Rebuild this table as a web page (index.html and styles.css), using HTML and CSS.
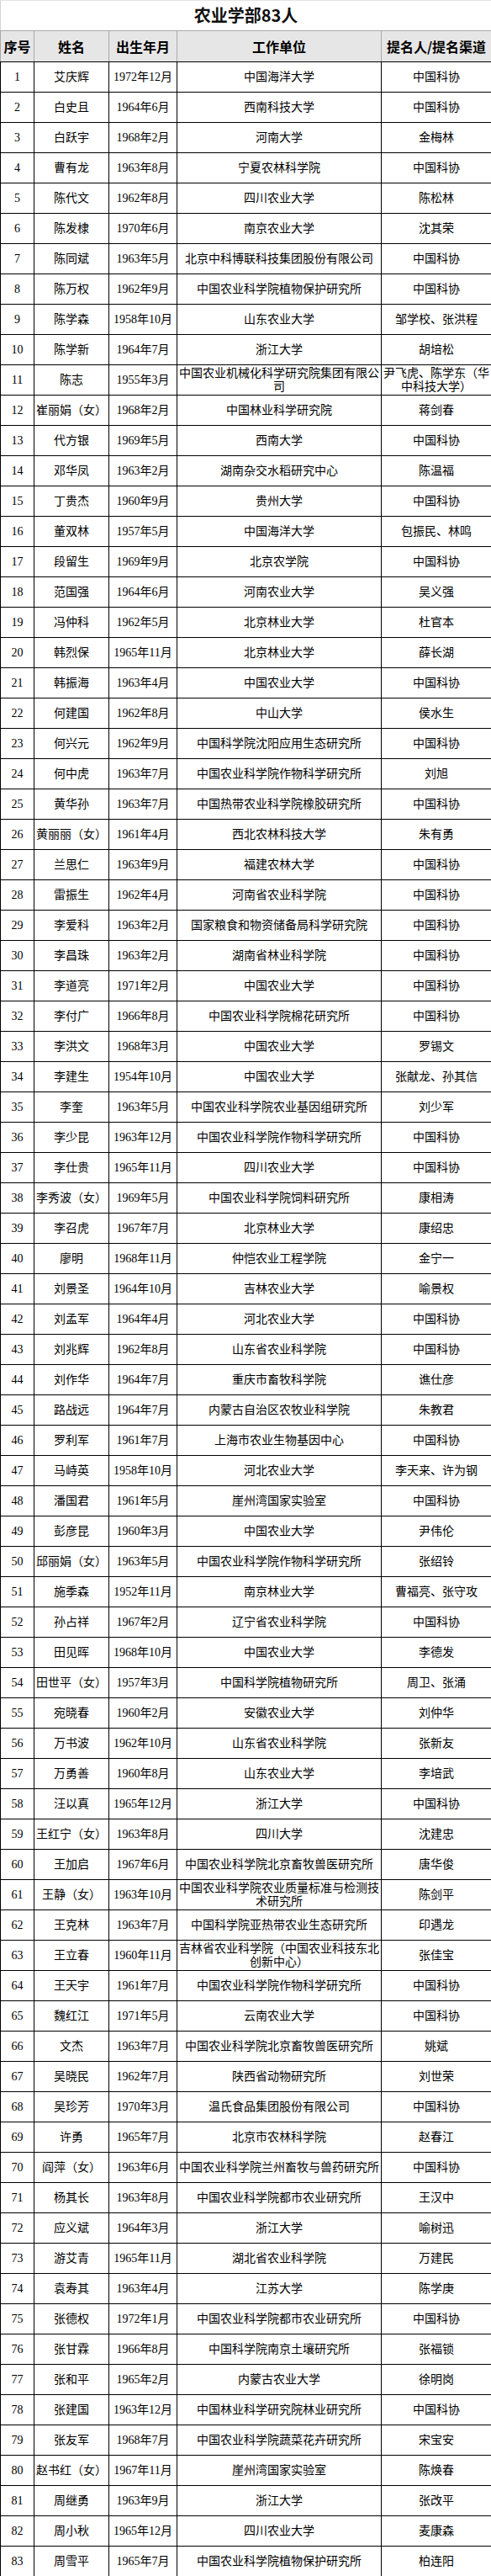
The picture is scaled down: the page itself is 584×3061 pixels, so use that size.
FILE: index.html
```html
<!DOCTYPE html>
<html lang="zh-CN">
<head>
<meta charset="utf-8">
<title>农业学部83人</title>
<link rel="stylesheet" href="styles.css">
</head>
<body>
<div class="sheet">
<div class="title">农业学部83人</div>
<table class="list">
<colgroup><col class="c-no"><col class="c-name"><col class="c-date"><col class="c-org"><col class="c-nom"></colgroup>
<thead>
<tr><th>序号</th><th>姓名</th><th>出生年月</th><th>工作单位</th><th>提名人/提名渠道</th></tr>
</thead>
<tbody>
<tr><td>1</td><td>艾庆辉</td><td>1972年12月</td><td>中国海洋大学</td><td>中国科协</td></tr>
<tr><td>2</td><td>白史且</td><td>1964年6月</td><td>西南科技大学</td><td>中国科协</td></tr>
<tr><td>3</td><td>白跃宇</td><td>1968年2月</td><td>河南大学</td><td>金梅林</td></tr>
<tr><td>4</td><td>曹有龙</td><td>1963年8月</td><td>宁夏农林科学院</td><td>中国科协</td></tr>
<tr><td>5</td><td>陈代文</td><td>1962年8月</td><td>四川农业大学</td><td>陈松林</td></tr>
<tr><td>6</td><td>陈发棣</td><td>1970年6月</td><td>南京农业大学</td><td>沈其荣</td></tr>
<tr><td>7</td><td>陈同斌</td><td>1963年5月</td><td>北京中科博联科技集团股份有限公司</td><td>中国科协</td></tr>
<tr><td>8</td><td>陈万权</td><td>1962年9月</td><td>中国农业科学院植物保护研究所</td><td>中国科协</td></tr>
<tr><td>9</td><td>陈学森</td><td>1958年10月</td><td>山东农业大学</td><td>邹学校、张洪程</td></tr>
<tr><td>10</td><td>陈学新</td><td>1964年7月</td><td>浙江大学</td><td>胡培松</td></tr>
<tr><td>11</td><td>陈志</td><td>1955年3月</td><td>中国农业机械化科学研究院集团有限公司</td><td>尹飞虎、陈学东（华中科技大学）</td></tr>
<tr><td>12</td><td>崔丽娟（女）</td><td>1968年2月</td><td>中国林业科学研究院</td><td>蒋剑春</td></tr>
<tr><td>13</td><td>代方银</td><td>1969年5月</td><td>西南大学</td><td>中国科协</td></tr>
<tr><td>14</td><td>邓华凤</td><td>1963年2月</td><td>湖南杂交水稻研究中心</td><td>陈温福</td></tr>
<tr><td>15</td><td>丁贵杰</td><td>1960年9月</td><td>贵州大学</td><td>中国科协</td></tr>
<tr><td>16</td><td>董双林</td><td>1957年5月</td><td>中国海洋大学</td><td>包振民、林鸣</td></tr>
<tr><td>17</td><td>段留生</td><td>1969年9月</td><td>北京农学院</td><td>中国科协</td></tr>
<tr><td>18</td><td>范国强</td><td>1964年6月</td><td>河南农业大学</td><td>吴义强</td></tr>
<tr><td>19</td><td>冯仲科</td><td>1962年5月</td><td>北京林业大学</td><td>杜官本</td></tr>
<tr><td>20</td><td>韩烈保</td><td>1965年11月</td><td>北京林业大学</td><td>薛长湖</td></tr>
<tr><td>21</td><td>韩振海</td><td>1963年4月</td><td>中国农业大学</td><td>中国科协</td></tr>
<tr><td>22</td><td>何建国</td><td>1962年8月</td><td>中山大学</td><td>侯水生</td></tr>
<tr><td>23</td><td>何兴元</td><td>1962年9月</td><td>中国科学院沈阳应用生态研究所</td><td>中国科协</td></tr>
<tr><td>24</td><td>何中虎</td><td>1963年7月</td><td>中国农业科学院作物科学研究所</td><td>刘旭</td></tr>
<tr><td>25</td><td>黄华孙</td><td>1963年7月</td><td>中国热带农业科学院橡胶研究所</td><td>中国科协</td></tr>
<tr><td>26</td><td>黄丽丽（女）</td><td>1961年4月</td><td>西北农林科技大学</td><td>朱有勇</td></tr>
<tr><td>27</td><td>兰思仁</td><td>1963年9月</td><td>福建农林大学</td><td>中国科协</td></tr>
<tr><td>28</td><td>雷振生</td><td>1962年4月</td><td>河南省农业科学院</td><td>中国科协</td></tr>
<tr><td>29</td><td>李爱科</td><td>1963年2月</td><td>国家粮食和物资储备局科学研究院</td><td>中国科协</td></tr>
<tr><td>30</td><td>李昌珠</td><td>1963年2月</td><td>湖南省林业科学院</td><td>中国科协</td></tr>
<tr><td>31</td><td>李道亮</td><td>1971年2月</td><td>中国农业大学</td><td>中国科协</td></tr>
<tr><td>32</td><td>李付广</td><td>1966年8月</td><td>中国农业科学院棉花研究所</td><td>中国科协</td></tr>
<tr><td>33</td><td>李洪文</td><td>1968年3月</td><td>中国农业大学</td><td>罗锡文</td></tr>
<tr><td>34</td><td>李建生</td><td>1954年10月</td><td>中国农业大学</td><td>张献龙、孙其信</td></tr>
<tr><td>35</td><td>李奎</td><td>1963年5月</td><td>中国农业科学院农业基因组研究所</td><td>刘少军</td></tr>
<tr><td>36</td><td>李少昆</td><td>1963年12月</td><td>中国农业科学院作物科学研究所</td><td>中国科协</td></tr>
<tr><td>37</td><td>李仕贵</td><td>1965年11月</td><td>四川农业大学</td><td>中国科协</td></tr>
<tr><td>38</td><td>李秀波（女）</td><td>1969年5月</td><td>中国农业科学院饲料研究所</td><td>康相涛</td></tr>
<tr><td>39</td><td>李召虎</td><td>1967年7月</td><td>北京林业大学</td><td>康绍忠</td></tr>
<tr><td>40</td><td>廖明</td><td>1968年11月</td><td>仲恺农业工程学院</td><td>金宁一</td></tr>
<tr><td>41</td><td>刘景圣</td><td>1964年10月</td><td>吉林农业大学</td><td>喻景权</td></tr>
<tr><td>42</td><td>刘孟军</td><td>1964年4月</td><td>河北农业大学</td><td>中国科协</td></tr>
<tr><td>43</td><td>刘兆辉</td><td>1962年8月</td><td>山东省农业科学院</td><td>中国科协</td></tr>
<tr><td>44</td><td>刘作华</td><td>1964年7月</td><td>重庆市畜牧科学院</td><td>谯仕彦</td></tr>
<tr><td>45</td><td>路战远</td><td>1964年7月</td><td>内蒙古自治区农牧业科学院</td><td>朱教君</td></tr>
<tr><td>46</td><td>罗利军</td><td>1961年7月</td><td>上海市农业生物基因中心</td><td>中国科协</td></tr>
<tr><td>47</td><td>马峙英</td><td>1958年10月</td><td>河北农业大学</td><td>李天来、许为钢</td></tr>
<tr><td>48</td><td>潘国君</td><td>1961年5月</td><td>崖州湾国家实验室</td><td>中国科协</td></tr>
<tr><td>49</td><td>彭彦昆</td><td>1960年3月</td><td>中国农业大学</td><td>尹伟伦</td></tr>
<tr><td>50</td><td>邱丽娟（女）</td><td>1963年5月</td><td>中国农业科学院作物科学研究所</td><td>张绍铃</td></tr>
<tr><td>51</td><td>施季森</td><td>1952年11月</td><td>南京林业大学</td><td>曹福亮、张守攻</td></tr>
<tr><td>52</td><td>孙占祥</td><td>1967年2月</td><td>辽宁省农业科学院</td><td>中国科协</td></tr>
<tr><td>53</td><td>田见晖</td><td>1968年10月</td><td>中国农业大学</td><td>李德发</td></tr>
<tr><td>54</td><td>田世平（女）</td><td>1957年3月</td><td>中国科学院植物研究所</td><td>周卫、张涌</td></tr>
<tr><td>55</td><td>宛晓春</td><td>1960年2月</td><td>安徽农业大学</td><td>刘仲华</td></tr>
<tr><td>56</td><td>万书波</td><td>1962年10月</td><td>山东省农业科学院</td><td>张新友</td></tr>
<tr><td>57</td><td>万勇善</td><td>1960年8月</td><td>山东农业大学</td><td>李培武</td></tr>
<tr><td>58</td><td>汪以真</td><td>1965年12月</td><td>浙江大学</td><td>中国科协</td></tr>
<tr><td>59</td><td>王红宁（女）</td><td>1963年8月</td><td>四川大学</td><td>沈建忠</td></tr>
<tr><td>60</td><td>王加启</td><td>1967年6月</td><td>中国农业科学院北京畜牧兽医研究所</td><td>唐华俊</td></tr>
<tr><td>61</td><td>王静（女）</td><td>1963年10月</td><td>中国农业科学院农业质量标准与检测技术研究所</td><td>陈剑平</td></tr>
<tr><td>62</td><td>王克林</td><td>1963年7月</td><td>中国科学院亚热带农业生态研究所</td><td>印遇龙</td></tr>
<tr><td>63</td><td>王立春</td><td>1960年11月</td><td>吉林省农业科学院（中国农业科技东北创新中心）</td><td>张佳宝</td></tr>
<tr><td>64</td><td>王天宇</td><td>1961年7月</td><td>中国农业科学院作物科学研究所</td><td>中国科协</td></tr>
<tr><td>65</td><td>魏红江</td><td>1971年5月</td><td>云南农业大学</td><td>中国科协</td></tr>
<tr><td>66</td><td>文杰</td><td>1963年7月</td><td>中国农业科学院北京畜牧兽医研究所</td><td>姚斌</td></tr>
<tr><td>67</td><td>吴晓民</td><td>1962年7月</td><td>陕西省动物研究所</td><td>刘世荣</td></tr>
<tr><td>68</td><td>吴珍芳</td><td>1970年3月</td><td>温氏食品集团股份有限公司</td><td>中国科协</td></tr>
<tr><td>69</td><td>许勇</td><td>1965年7月</td><td>北京市农林科学院</td><td>赵春江</td></tr>
<tr><td>70</td><td>阎萍（女）</td><td>1963年6月</td><td>中国农业科学院兰州畜牧与兽药研究所</td><td>中国科协</td></tr>
<tr><td>71</td><td>杨其长</td><td>1963年8月</td><td>中国农业科学院都市农业研究所</td><td>王汉中</td></tr>
<tr><td>72</td><td>应义斌</td><td>1964年3月</td><td>浙江大学</td><td>喻树迅</td></tr>
<tr><td>73</td><td>游艾青</td><td>1965年11月</td><td>湖北省农业科学院</td><td>万建民</td></tr>
<tr><td>74</td><td>袁寿其</td><td>1963年4月</td><td>江苏大学</td><td>陈学庚</td></tr>
<tr><td>75</td><td>张德权</td><td>1972年1月</td><td>中国农业科学院都市农业研究所</td><td>中国科协</td></tr>
<tr><td>76</td><td>张甘霖</td><td>1966年8月</td><td>中国科学院南京土壤研究所</td><td>张福锁</td></tr>
<tr><td>77</td><td>张和平</td><td>1965年2月</td><td>内蒙古农业大学</td><td>徐明岗</td></tr>
<tr><td>78</td><td>张建国</td><td>1963年12月</td><td>中国林业科学研究院林业研究所</td><td>中国科协</td></tr>
<tr><td>79</td><td>张友军</td><td>1968年7月</td><td>中国农业科学院蔬菜花卉研究所</td><td>宋宝安</td></tr>
<tr><td>80</td><td>赵书红（女）</td><td>1967年11月</td><td>崖州湾国家实验室</td><td>陈焕春</td></tr>
<tr><td>81</td><td>周继勇</td><td>1963年9月</td><td>浙江大学</td><td>张改平</td></tr>
<tr><td>82</td><td>周小秋</td><td>1965年12月</td><td>四川农业大学</td><td>麦康森</td></tr>
<tr><td>83</td><td>周雪平</td><td>1965年7月</td><td>中国农业科学院植物保护研究所</td><td>柏连阳</td></tr>
</tbody>
</table>
</div>
</body>
</html>
```
FILE: styles.css
```css
html, body {
  margin: 0;
  padding: 0;
  background: #ffffff;
}

.sheet {
  width: 584px;
}

.title {
  height: 36px;
  box-sizing: border-box;
  border-left: 1px solid #d4d4d4;
  border-top: 1px solid #e4e4e4;
  text-align: center;
  font-family: "Noto Sans CJK SC", sans-serif;
  font-weight: bold;
  font-size: 20px;
  line-height: 34px;
  color: #111111;
}

.list {
  width: 584px;
  border-collapse: collapse;
  table-layout: fixed;
}

.c-no { width: 40px; }
.c-name { width: 89px; }
.c-date { width: 81px; }
.c-org { width: 243px; }
.c-nom { width: 131px; }

.list th,
.list td {
  border: 1px solid #000000;
  padding: 0 1px;
  text-align: center;
  vertical-align: middle;
  color: #000000;
}

.list th {
  height: 36px;
  background: #e7e6e6;
  border-color: #a9a9a9;
  border-bottom-color: #000000;
  font-family: "Noto Sans CJK SC", sans-serif;
  font-weight: bold;
  font-size: 16px;
  line-height: 20px;
  white-space: nowrap;
}

.list td {
  height: 35px;
  font-family: "Liberation Serif", "Noto Sans CJK SC", serif;
  font-size: 14px;
  line-height: 16px;
}
```
